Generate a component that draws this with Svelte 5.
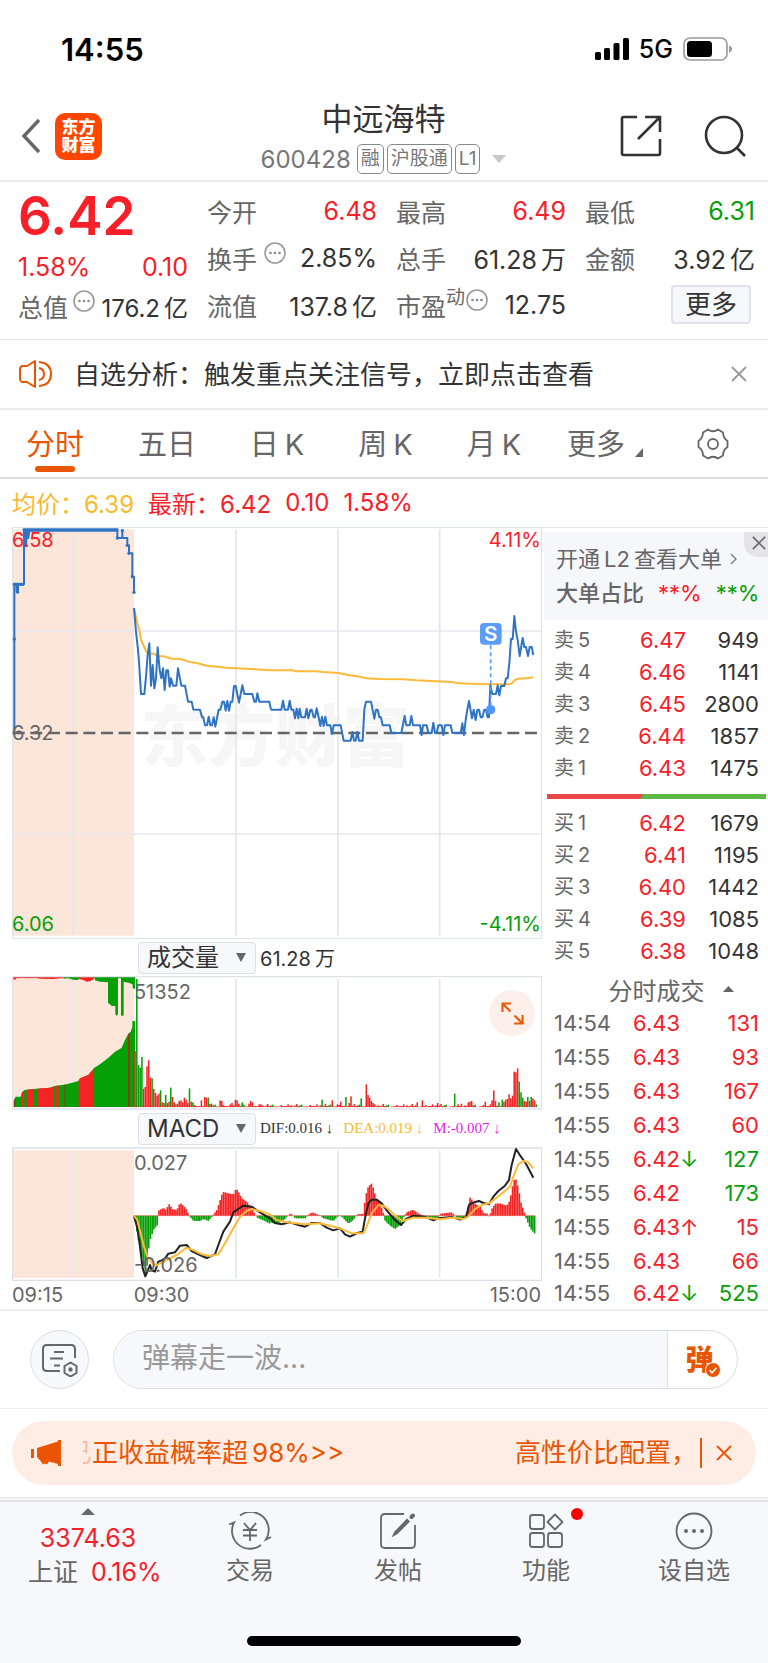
<script lang="ts">
interface Bar {
	x: number;
	y: number;
	h: number;
	up: boolean;
}

const quoteCells = [
	{ label: "今开", value: "6.48", tone: "up" },
	{ label: "最高", value: "6.49", tone: "up" },
	{ label: "最低", value: "6.31", tone: "down" },
	{ label: "换手", value: "2.85%", info: true },
	{ label: "总手", value: "61.28万" },
	{ label: "金额", value: "3.92亿" },
	{ label: "流值", value: "137.8亿" },
	{ label: "市盈", sup: "动", value: "12.75", info: true, tight: true },
];

const periods = ["分时", "五日", "日K", "周K", "月K"];
let period = $state("分时");
let volumeIndicator = $state("成交量");
let subIndicator = $state("MACD");
let comment = $state("");

const asks: [string, string, number][] = [
	["卖5", "6.47", 949],
	["卖4", "6.46", 1141],
	["卖3", "6.45", 2800],
	["卖2", "6.44", 1857],
	["卖1", "6.43", 1475],
];
const bids: [string, string, number][] = [
	["买1", "6.42", 1679],
	["买2", "6.41", 1195],
	["买3", "6.40", 1442],
	["买4", "6.39", 1085],
	["买5", "6.38", 1048],
];
const askShare = 44;

const trades = [
	{ time: "14:54", price: "6.43", lots: 131, up: true },
	{ time: "14:55", price: "6.43", lots: 93, up: true },
	{ time: "14:55", price: "6.43", lots: 167, up: true },
	{ time: "14:55", price: "6.43", lots: 60, up: true },
	{ time: "14:55", price: "6.42", move: "↓", lots: 127, up: false },
	{ time: "14:55", price: "6.42", lots: 173, up: false },
	{ time: "14:55", price: "6.43", move: "↑", lots: 15, up: true },
	{ time: "14:55", price: "6.43", lots: 66, up: true },
	{ time: "14:55", price: "6.42", move: "↓", lots: 525, up: false },
];

// Split where Chinese meets Latin, so the two can be set slightly apart
const runs = (text: string) =>
	text.split(/(?<=[\u4e00-\u9fa5])(?=[0-9A-Z])|(?<=[0-9A-Z])(?=[\u4e00-\u9fa5])/);

// Chart units: 3 per pixel, one trading minute is 5.1 wide
const STEP = 5.1;
const GRID_X = [708, 1014, 1319];
const AFTERNOON = 810;

const pricePre =
	"43,639 43,193 50,193 50,216 54,216 54,193 72,193 72,30 78,30 78,76 81,30 85,30 85,54 88,30 352,30 352,54 367,54 367,30 367,54 382,54 382,76 387,76 387,100 397,100 397,170 402,170 402,217";
const preDots = [
	[43, 357],
	[43, 193],
	[53, 216],
	[78, 76],
	[352, 54],
	[367, 32],
	[382, 76],
	[387, 100],
	[397, 170],
	[402, 217],
];
const priceAm =
	"402,264 408,335 414,390 417,425 423,522 433,522 438,470 443,405 448,370 453,497 458,435 463,505 468,475 473,382 479,450 484,475 489,445 494,510 499,451 504,451 509,500 513,475 519,497 529,497 534,445 544,497 555,497 564,545 575,545 580,569 600,569 606,592 610,592 615,616 621,616 626,590 631,616 636,616 641,592 646,620 656,569 661,569 667,545 672,545 677,572 682,543 687,572 692,545 697,545 702,498 707,498 717,548 727,496 733,522 757,522 763,545 768,545 772,520 778,545 808,545 813,569";
const pricePm =
	"3,569 34,569 39,542 44,569 54,569 59,542 64,569 70,569 75,595 80,566 85,595 89,566 94,592 105,592 110,566 115,595 121,569 125,569 131,592 135,592 140,565 146,592 151,618 156,590 161,618 166,590 171,616 181,616 186,642 191,616 212,616 221,662 242,662 247,636 252,662 257,662 262,636 267,662 278,662 283,569 288,545 303,545 313,596 318,569 323,569 328,592 333,592 338,616 359,616 364,639 394,639 404,588 409,616 419,616 424,588 429,616 450,616 455,645 459,616 470,616 475,639 485,639 490,608 495,639 500,639 505,616 515,616 520,645 525,616 542,616 547,639 572,639 577,610 582,645 587,600 592,569 597,543 606,595 611,569 617,600 622,569 627,569 632,592 637,592 643,569 648,569 653,592 657,592 661,496 667,522 678,522 683,496 688,526 693,498 703,498 708,475 713,475 718,430 723,357 728,357 733,288 738,335 743,360 749,408 758,354 763,381 768,381 774,408 779,381 785,381 790,405";
const avgAm =
	"402,264 412,310 418,330 423,360 430,375 440,397 465,403 475,408 490,409 515,416 540,417 555,421 570,426 590,429 620,437 680,443 740,446 810,451";
const avgPm =
	"0,451 70,451 75,454 140,454 160,456 205,459 240,466 275,471 288,475 330,477 400,478 440,481 500,484 545,486 560,489 600,491 660,493 718,493 725,490 735,480 745,476 775,474 790,472";

// Negative height is a falling minute
const volumePeaks: Record<number, number> = {
	0: 168, 1: -384, 2: -126, 3: -118, 4: -150, 5: 55, 6: 60, 7: 122, 8: 140, 9: 88, 10: -86, 11: 54,
	12: 42, 13: 34, 14: 40, 15: -50, 16: 14, 17: -12, 18: -36, 19: 12, 20: 16, 21: -58, 22: 30, 23: 14,
	24: 8, 25: -10, 26: 18, 27: 20, 28: 14, 29: 28, 30: 22, 31: 12, 32: -56, 33: 16, 34: -14, 39: 20,
	41: 30, 42: 28, 43: -28, 45: 10, 50: 20, 51: 18, 57: 12, 59: 22, 60: 20, 61: 10, 63: -14, 67: 10,
	68: 18, 69: 14, 74: 8, 110: -22, 116: 20, 119: 8, 121: 16, 124: -30, 126: 12, 127: 32, 133: -26,
	136: 68, 137: 36, 138: 28, 139: 18, 140: 12, 166: 14, 169: 20, 178: 12, 188: -40, 190: 8, 192: 10,
	196: 14, 197: 16, 198: 18, 206: 16, 210: 20, 211: 50, 212: 18, 214: -14, 216: -22, 217: 16, 218: 22,
	219: 24, 220: 38, 221: 26, 222: 34, 223: 106, 224: 104, 225: 116, 226: -76, 227: -44, 228: -28,
	229: 18, 230: 16, 231: -30, 232: 18, 233: -30, 234: 26, 235: 20, 236: -8,
};
const quiet = [2, 5, 0, 3, -3, 6, 2, 0, 8, -5, 2, 4, 0, 2, -7, 3, 9];

const volumeBars: Bar[] = Array.from({ length: 237 }, (_, i) => {
	const v = volumePeaks[i] ?? quiet[(i * 5) % quiet.length];
	return { x: 403 + i * STEP, y: 516 - Math.abs(v), h: Math.abs(v), up: v > 0 };
});

const preRed = [
	[42, 4],
	[64, 8],
	[80, 22],
	[111, 51],
	[166, 10],
	[193, 3],
	[236, 45],
	[384, 5],
];

const ZERO = 842;
const histAm: number[][] = [
	[402, 842], [412, 900], [420, 940], [430, 990], [435, 1022], [440, 1000], [445, 945], [450, 915],
	[455, 900], [460, 885], [472, 870], [474, 828], [490, 818], [496, 826], [508, 806], [515, 822],
	[530, 825], [540, 803], [550, 812], [560, 825], [566, 842], [572, 848], [580, 858], [600, 858],
	[610, 852], [625, 858], [635, 845], [642, 836], [650, 825], [660, 795], [668, 770], [680, 774],
	[700, 778], [708, 760], [715, 770], [725, 790], [740, 800], [755, 820], [765, 838], [770, 848],
	[790, 856], [809, 866],
];
const histPm: number[][] = [
	[0, 862], [20, 868], [45, 852], [58, 837], [66, 838], [75, 850], [105, 850], [118, 836], [128, 832],
	[150, 842], [160, 850], [190, 858], [205, 842], [215, 845], [235, 866], [250, 855], [262, 838],
	[280, 836], [285, 790], [292, 760], [303, 744], [310, 760], [318, 790], [330, 805], [340, 835],
	[345, 858], [360, 872], [375, 882], [390, 870], [402, 843], [410, 832], [428, 824], [450, 838],
	[465, 842], [480, 848], [500, 850], [512, 836], [545, 832], [560, 848], [580, 850], [590, 835],
	[600, 786], [612, 805], [630, 815], [640, 834], [652, 836], [658, 848], [663, 825], [675, 806],
	[690, 805], [710, 812], [720, 795], [725, 762], [735, 725], [745, 760], [752, 800], [762, 830],
	[768, 850], [780, 880], [793, 895],
];
const hist = [...histAm, ...histPm.map(([x, y]) => [x + AFTERNOON, y])];

function valueAt(points: number[][], x: number) {
	const i = points.findIndex((p) => p[0] >= x);
	if (i < 1) return points[i < 0 ? points.length - 1 : 0][1];
	const [x0, y0] = points[i - 1];
	const [x1, y1] = points[i];
	return y0 + ((y1 - y0) * (x - x0)) / (x1 - x0);
}

const macdBars: Bar[] = Array.from({ length: 236 }, (_, i) => {
	const x = 403 + i * STEP;
	const v = valueAt(hist, x + 2);
	return { x, y: Math.min(v, ZERO), h: Math.abs(v - ZERO), up: v < ZERO };
});

const difAm =
	"402,842 412,880 420,935 428,1000 436,1024 442,1010 450,990 455,1006 465,1010 475,980 485,976 495,970 505,956 525,952 540,932 560,930 575,948 600,960 620,969 645,958 655,930 670,890 690,860 700,832 715,822 730,812 755,815 780,832 810,850";
const difPm =
	"0,850 15,864 35,868 60,862 85,870 105,875 125,864 150,864 170,878 190,886 210,880 225,898 240,905 262,894 278,890 285,850 295,805 305,794 320,794 335,805 355,832 375,855 393,870 408,852 430,842 465,845 490,856 505,850 545,846 570,854 588,846 598,808 612,802 627,798 640,804 657,808 670,785 685,768 705,752 717,735 725,690 738,642 748,658 758,672 770,690 790,728";
const deaAm =
	"402,842 412,855 422,895 432,935 442,965 455,982 468,992 480,985 500,975 530,960 560,938 580,945 605,958 630,963 655,958 675,925 700,880 720,845 740,828 755,822 780,828 810,838";
const deaPm =
	"0,838 20,855 50,862 105,868 150,865 210,880 245,895 280,895 290,875 305,835 325,810 340,812 355,822 378,845 398,858 430,848 470,848 510,853 545,848 580,852 595,845 615,822 635,810 657,805 680,788 720,755 730,725 745,688 760,678 775,682 790,700";
</script>

{#snippet info()}
	<svg class="info" viewBox="0 0 22 22" aria-hidden="true">
		<circle cx="11" cy="11" r="10" fill="none" stroke="#999" stroke-width="1.6" />
		<circle cx="6.5" cy="11" r="1.3" fill="#888" />
		<circle cx="11" cy="11" r="1.3" fill="#888" />
		<circle cx="15.5" cy="11" r="1.3" fill="#888" />
	</svg>
{/snippet}

{#snippet cross()}
	<svg class="cross" viewBox="0 0 16 16" aria-hidden="true">
		<path d="M1 1l14 14M15 1L1 15" fill="none" stroke="currentColor" stroke-width="1.8" />
	</svg>
{/snippet}

{#snippet mixed(text: string)}{#each runs(text) as run}<span class="run">{run}</span>{/each}{/snippet}

{#snippet book(rows: [string, string, number][])}
	<table class="book">
		<tbody>
			{#each rows as [level, price, lots]}
				<tr>
					<th scope="row">{@render mixed(level)}</th>
					<td class="up">{price}</td>
					<td>{lots}</td>
				</tr>
			{/each}
		</tbody>
	</table>
{/snippet}

<div class="screen">
	<div class="status">
		<span class="clock">14:55</span>
		<div class="signals">
			<svg width="34" height="22" viewBox="0 0 34 22" aria-hidden="true">
				<rect x="0" y="14" width="6" height="8" rx="1.5" />
				<rect x="9" y="10" width="6" height="12" rx="1.5" />
				<rect x="18.500" y="5" width="6" height="17" rx="1.5" />
				<rect x="28" y="0" width="6" height="22" rx="1.5" />
			</svg>
			<span>5G</span>
			<svg width="49" height="24" viewBox="0 0 49 24" aria-hidden="true">
				<rect x="1" y="1" width="43" height="22" rx="6" fill="none" stroke="#999" stroke-width="1.6" />
				<rect x="4" y="4" width="25" height="16" rx="3.5" />
				<path d="M46 8.500q3 1 3 3.500t-3 3.500z" fill="#999" />
			</svg>
		</div>
	</div>

	<header class="top">
		<div class="side-left">
			<button class="plain" aria-label="返回">
				<svg width="20" height="36" viewBox="0 0 20 36">
					<path d="M18 2L3 18l15 16" fill="none" stroke="#666" stroke-width="3.400" />
				</svg>
			</button>
			<a class="logo" href="#home">东方<br />财富</a>
		</div>
		<div class="stock">
			<h1>中远海特</h1>
			<div class="code">
				<span>600428</span>
				<span class="tag">融</span>
				<span class="tag">沪股通</span>
				<span class="tag">L1</span>
				<svg class="caret" width="14" height="8" viewBox="0 0 14 8" aria-hidden="true">
					<path d="M0 0h14L7 8z" fill="#c8c8c8" />
				</svg>
			</div>
		</div>
		<div class="side-right">
			<button class="plain" aria-label="分享">
				<svg width="42" height="42" viewBox="0 0 42 42" fill="none" stroke="#333" stroke-width="2.600">
					<path d="M17 2H3.500Q2 2 2 3.500V38.500Q2 40 3.500 40H38.500Q40 40 40 38.500V24" />
					<path d="M25 2H40V17M40 2L18 24" />
				</svg>
			</button>
			<button class="plain" aria-label="搜索">
				<svg width="42" height="42" viewBox="0 0 42 42" fill="none" stroke="#333" stroke-width="2.600">
					<circle cx="20" cy="20" r="18" />
					<path d="M32 32l9 9" />
				</svg>
			</button>
		</div>
	</header>

	<section class="quote">
		<div class="last">
			<strong class="up">6.42</strong>
			<div class="pair change up"><span>1.58%</span><span>0.10</span></div>
			<div class="pair cap">
				<span class="label">总值{@render info()}</span>
				<span class="num">{@render mixed("176.2亿")}</span>
			</div>
		</div>
		<div class="cells">
			{#each quoteCells as cell}
				<div class="pair" class:tight={cell.tight}>
					<span class="label">
						{cell.label}{#if cell.sup}<span class="sup">{cell.sup}</span>{/if}{#if cell.info}{@render info()}{/if}
					</span>
					<span class="num {cell.tone ?? ''}">{@render mixed(cell.value)}</span>
				</div>
			{/each}
			<button class="more">更多</button>
		</div>
	</section>

	<div class="alert">
		<svg width="34" height="30" viewBox="0 0 34 30" fill="none" stroke="#ea5504" stroke-width="2" aria-hidden="true">
			<path d="M16 2v26l-8-5H3q-2-1-2-3V10q0-2 2-3h5z" stroke-linejoin="round" />
			<path d="M20 9q5 1 5 6t-5 6M20 3q12 1 12 12T20 27" />
		</svg>
		<a href="#signal">自选分析：触发重点关注信号，立即点击查看</a>
		<button class="plain" aria-label="关闭提示">{@render cross()}</button>
	</div>

	<nav class="tabs">
		{#each periods as name}
			<button class:active={period === name} onclick={() => (period = name)}>{@render mixed(name)}</button>
		{/each}
		<button class="more-tab">
			更多
			<svg width="8" height="9" viewBox="0 0 8 9" aria-hidden="true"><path d="M8 0v9H0z" fill="#666" /></svg>
		</button>
		<button class="gear" aria-label="图表设置">
			<svg width="32" height="32" viewBox="0 0 32 32" fill="none" stroke="#666" stroke-width="1.800">
				<path
					d="M11 1.500Q16 5 21 1.500L26 4.500Q26 10 30.500 13V19Q26 22 26 27.500L21 30.500Q16 27 11 30.500L6 27.500Q6 22 1.500 19V13Q6 10 6 4.500Z"
					stroke-linejoin="round"
				/>
				<circle cx="16" cy="16" r="5" />
			</svg>
		</button>
	</nav>

	<div class="legend">
		<span class="avg">均价：<b>6.39</b></span>
		<span class="up">最新：<b>6.42</b></span>
		<span class="up">0.10</span>
		<span class="up">1.58%</span>
	</div>

	<main class="board">
		<div class="charts">
			<div class="plot">
				<svg viewBox="36 21 1590 1236" role="img" aria-label="分时走势">
					<text class="watermark" x="422" y="722">东方财富</text>
					<rect x="38" y="28" width="364" height="1219" fill="#fce6da" />
					<g stroke="#e3e6ec" stroke-width="5">
						<path d="M219 28V1247M38 333H1625M38 942H1625" stroke="#e8e8f0" />
						{#each GRID_X as x}
							<path d="M{x} 28V1247" />
						{/each}
					</g>
					<path d="M38 1256V22H1625V1256Z" fill="none" stroke="#dfe3ea" stroke-width="4" />
					<polyline points={avgAm} class="line avg-line" />
					<polyline points={avgPm} class="line avg-line" transform="translate({AFTERNOON} 0)" />
					<path d="M38 639H1615" stroke="#666" stroke-width="7" stroke-dasharray="36 17" />
					<g class="price-line">
						<polyline points={pricePre} class="line" />
						<path d="M68 30H355" stroke-width="10" />
						<path d="M42 193H72" stroke-width="9" />
						{#each preDots as [cx, cy]}
							<circle {cx} {cy} r="5" />
						{/each}
						<polyline points={priceAm} class="line" />
						<polyline points={pricePm} class="line" transform="translate({AFTERNOON} 0)" />
					</g>
					<path d="M1472 376V560" stroke="#5a9df8" stroke-width="5" stroke-dasharray="12 9" />
					<circle cx="1472" cy="569" r="14" fill="#4f97f7" />
					<rect x="1440" y="309" width="65" height="65" rx="12" fill="#5a9df8" />
					<text x="1472" y="364" class="marker">S</text>
				</svg>
				<span class="tick top-left up">6.58</span>
				<span class="tick top-right up">4.11%</span>
				<span class="tick middle">6.32</span>
				<span class="tick bottom-left down">6.06</span>
				<span class="tick bottom-right down">-4.11%</span>
			</div>

			<div class="indicator">
				<label class="picker">
					<select bind:value={volumeIndicator} aria-label="成交量指标">
						<option>成交量</option>
						<option>成交额</option>
					</select>
					<svg width="10" height="9" viewBox="0 0 10 9" aria-hidden="true"><path d="M0 0h10L5 9z" fill="#666" /></svg>
				</label>
				<span class="volume-total">{@render mixed("61.28万")}</span>
			</div>

			<div class="plot">
				<svg viewBox="36 123 1590 402" role="img" aria-label="成交量">
					<defs>
						<clipPath id="pre-volume">
							<path
								d="M40 516L40 500L47 485H62L66 472L74 465L100 462L150 458L165 453L200 448L235 438L240 430L265 420L283 398L300 388L325 368L345 350L365 338L375 315L384 298L392 290L397 275V258H405V516Z"
							/>
						</clipPath>
					</defs>
					<rect x="38" y="126" width="364" height="390" fill="#fce6da" />
					<path d="M219 132V516" stroke="#e8e8f0" stroke-width="5" />
					{#each GRID_X as x}
						<path d="M{x} 132V516" stroke="#e3e6ec" stroke-width="5" />
					{/each}
					<g clip-path="url(#pre-volume)">
						<rect x="38" y="250" width="368" height="266" fill="#06a006" />
						{#each preRed as [x, width]}
							<rect {x} y="250" {width} height="266" fill={width > 5 ? "#f52424" : "#8a3c10"} />
						{/each}
					</g>
					<path
						d="M190 126V131L205 130L220 134L235 135V132L285 130V136L300 140L324 142V204L330 208L335 213H346V238L350 242L354 238V130H363V240L367 244L371 240V140L385 143L398 148V160L405 162V126Z"
						fill="#06a006"
					/>
					<path
						d="M38 126V130L44 135L50 130L70 129L80 130L110 129L118 131L160 132L190 129V126ZM236 126V132L250 135L260 140L272 138L282 132V126Z"
						fill="#f52424"
					/>
					{#each volumeBars as bar}
						<rect x={bar.x} y={bar.y} width="4.600" height={bar.h} fill={bar.up ? "#f52424" : "#06a006"} />
					{/each}
					<path d="M403 515H1600" stroke="#f52424" stroke-width="2" stroke-dasharray="14 8" />
					<path d="M38 522V125H1625V522Z" fill="none" stroke="#dfe3ea" stroke-width="4" />
				</svg>
				<span class="tick at-open">51352</span>
				<button class="expand" aria-label="展开">
					<svg width="23" height="23" viewBox="0 0 23 23" fill="none" stroke="#ee5a0c" stroke-width="2.200">
						<path d="M1.500 10V1.500H10M2 2l7.500 7.500M21.500 13v8.500H13M21 21l-7.500-7.500" />
					</svg>
				</button>
			</div>

			<div class="indicator">
				<label class="picker">
					<select bind:value={subIndicator} aria-label="副图指标">
						<option>MACD</option>
						<option>KDJ</option>
					</select>
					<svg width="10" height="9" viewBox="0 0 10 9" aria-hidden="true"><path d="M0 0h10L5 9z" fill="#666" /></svg>
				</label>
				<div class="macd-values">
					<span>DIF:0.016 ↓</span>
					<span class="avg">DEA:0.019 ↓</span>
					<span class="hist">M:-0.007 ↓</span>
				</div>
			</div>

			<div class="plot">
				<svg viewBox="36 636 1590 402" role="img" aria-label="MACD">
					<rect x="38" y="646" width="364" height="383" fill="#fce6da" />
					<path d="M219 646V1029" stroke="#e8e8f0" stroke-width="5" />
					{#each GRID_X as x}
						<path d="M{x} 646V1029" stroke="#e3e6ec" stroke-width="5" />
					{/each}
					<path d="M38 1036V639H1625V1036Z" fill="none" stroke="#dcdfe6" stroke-width="4" />
					{#each macdBars as bar}
						<rect x={bar.x} y={bar.y} width="4.900" height={bar.h} fill={bar.up ? "#f52424" : "#06a006"} />
					{/each}
					<path d="M403 842H1605" stroke="#f52424" stroke-width="2" stroke-opacity="0.600" />
					<polyline points={difAm} class="line dif-line" />
					<polyline points={difPm} class="line dif-line" transform="translate({AFTERNOON} 0)" />
					<polyline points={deaAm} class="line avg-line" />
					<polyline points={deaPm} class="line avg-line" transform="translate({AFTERNOON} 0)" />
				</svg>
				<span class="tick at-open">0.027</span>
				<span class="tick at-open low">-0.026</span>
			</div>

			<div class="times">
				<span>09:15</span>
				<span>09:30</span>
				<span>15:00</span>
			</div>
		</div>

		<aside class="depth">
			<div class="unlock">
				<a href="#level2">
					<span>{@render mixed("开通L2查看大单")}</span>
					<svg width="7" height="12" viewBox="0 0 7 12" aria-hidden="true">
						<path d="M1 1l5 5-5 5" fill="none" stroke="#777" stroke-width="1.300" />
					</svg>
				</a>
				<div class="ratio">
					<strong>大单占比</strong>
					<span class="up">**%</span>
					<span class="down">**%</span>
				</div>
				<button class="dismiss" aria-label="关闭">{@render cross()}</button>
			</div>
			{@render book(asks)}
			<div class="balance">
				<div class="sell" style="width: {askShare}%"></div>
			</div>
			{@render book(bids)}
			<button class="ticks-title">
				分时成交
				<svg width="11" height="6" viewBox="0 0 11 6" aria-hidden="true"><path d="M0 6L5.500 0 11 6z" fill="#666" /></svg>
			</button>
			<table class="ticks">
				<tbody>
					{#each trades as trade}
						<tr>
							<td>{trade.time}</td>
							<td class="up">
								{trade.price}{#if trade.move}<span class={trade.move === "↑" ? "up" : "down"}>{trade.move}</span>{/if}
							</td>
							<td class={trade.up ? "up" : "down"}>{trade.lots}</td>
						</tr>
					{/each}
				</tbody>
			</table>
		</aside>
	</main>

	<form class="comment" onsubmit={(e) => e.preventDefault()}>
		<button type="button" class="round" aria-label="弹幕设置">
			<svg width="38" height="34" viewBox="0 0 38 34" fill="none" stroke="#666" stroke-width="2">
				<path d="M19 28H6q-4 0-4-4V6q0-4 4-4h24q4 0 4 4v9" />
				<path d="M13 9h10M9 15.500h13M13 22.500h6" />
				<path d="M29.500 19.500l6 3.500v7l-6 3.500-6-3.500v-7z" stroke-linejoin="round" />
				<circle cx="29.500" cy="26.500" r="1.200" fill="#666" />
			</svg>
		</button>
		<div class="field">
			<input type="text" bind:value={comment} placeholder="弹幕走一波..." aria-label="弹幕" />
			<button class="danmu" aria-label="弹幕开关">
				<span>弹</span>
				<svg width="16" height="16" viewBox="0 0 16 16" aria-hidden="true">
					<circle cx="8" cy="8" r="7.500" fill="#ea5504" stroke="#fff" />
					<path d="M4.500 8l2.500 2.700 4.500-5" fill="none" stroke="#fff" stroke-width="1.600" />
				</svg>
			</button>
		</div>
	</form>

	<div class="promo-wrap">
		<div class="promo">
			<svg width="30" height="26" viewBox="0 0 30 26" fill="#ea5504" aria-hidden="true">
				<path d="M0 9h3v9H0zM6 8L27 1.500V0h3v26h-3v-2l-9-2.500-2 3-2-1-2 1-2-3L6 17z" />
			</svg>
			<a class="ticker" href="#promo">
				<span class="leaving">已</span>
				<span class="tail">{@render mixed("正收益概率超98%>>")}</span>
				<span>高性价比配置，</span>
			</a>
			<button class="plain" aria-label="关闭广告">{@render cross()}</button>
		</div>
	</div>

	<footer>
		<nav class="bottom">
			<a class="index" href="#index">
				<span class="centered">
					<svg width="14" height="7" viewBox="0 0 14 7" aria-hidden="true"><path d="M0 7l7-7 7 7z" fill="#666" /></svg>
					<span class="up">3374.63</span>
				</span>
				<span class="name">上证 <b class="up">0.16%</b></span>
			</a>
			<a href="#trade">
				<svg width="44" height="38" viewBox="0 0 44 38" fill="none" stroke="#666" stroke-width="1.800">
					<path d="M12 3.500A18 18 0 0 1 38 27.500L43 25M33 33A18 18 0 0 1 6 10.500L1 12.500" />
					<path d="M16 11l6 7 6-7M15 18h14M15 23.500h14M22 18v11" />
				</svg>
				交易
			</a>
			<a href="#post">
				<svg width="38" height="38" viewBox="0 0 38 38" fill="none" stroke="#666" stroke-width="1.800">
					<path d="M25 2H6Q2 2 2 6V32Q2 36 6 36H32Q36 36 36 32V13" />
					<path d="M12.500 25.500L15.500 19.500 28 6.500 31 9.500 18.500 22z" fill="#666" stroke="none" />
					<path d="M32.500 5l1.500-1.500" stroke-width="4" stroke-linecap="round" />
				</svg>
				发帖
			</a>
			<a href="#features">
				<span class="badged">
					<svg width="36" height="38" viewBox="0 0 36 38" fill="none" stroke="#666" stroke-width="1.800">
						<rect x="2" y="3" width="14" height="14" rx="2.500" />
						<rect x="2" y="21" width="14" height="14" rx="2.500" />
						<rect x="20" y="21" width="14" height="14" rx="2.500" />
						<path d="M27 2.500L34.500 10 27 17.500 19.500 10z" stroke-linejoin="round" />
					</svg>
					<i class="dot"></i>
				</span>
				功能
			</a>
			<a href="#watch">
				<svg width="38" height="38" viewBox="0 0 38 38">
					<circle cx="19" cy="19" r="17.500" fill="none" stroke="#666" stroke-width="1.800" />
					<circle cx="11" cy="19" r="2" fill="#666" />
					<circle cx="19" cy="19" r="2" fill="#666" />
					<circle cx="27" cy="19" r="2" fill="#666" />
				</svg>
				设自选
			</a>
		</nav>
		<div class="home"></div>
	</footer>
</div>

<style>
	:global(body) {
		margin: 0;
		background: #fff;
	}

	.screen {
		font-family: Inter, "Noto Sans CJK SC", sans-serif;
		font-size: 24px;
		color: #333;
		overflow: hidden;
	}

	.screen :is(button, input, select) {
		font-family: inherit;
		color: inherit;
	}

	button {
		padding: 0;
		border: 0;
		background: none;
		cursor: pointer;
	}

	a {
		color: inherit;
		text-decoration: none;
	}

	svg {
		display: block;
		flex: none;
	}

	b {
		font-weight: 400;
	}

	table {
		width: 100%;
		border-collapse: collapse;
	}

	.up {
		color: #f82028;
	}

	.down {
		color: #06a006;
	}

	.avg {
		color: #fdb92c;
	}

	.run + .run {
		margin-left: 4px;
	}

	.status {
		display: flex;
		justify-content: space-between;
		align-items: center;
		height: 98px;
		padding: 0 36px 0 61px;
		color: #000;
	}

	.clock {
		font-size: 31px;
		font-weight: 600;
	}

	.signals {
		display: flex;
		align-items: center;
		gap: 10px;
		font-size: 25px;
		font-weight: 500;
	}

	.top {
		display: grid;
		grid-template-columns: 1fr auto 1fr;
		align-items: center;
		height: 84px;
		padding: 0 22px 0 21px;
		border-bottom: 2px solid #ebebeb;
		box-sizing: border-box;
	}

	.side-left,
	.side-right {
		display: flex;
		align-items: center;
		gap: 14px;
		padding-bottom: 6px;
	}

	.side-right {
		justify-content: flex-end;
		gap: 42px;
	}

	.logo {
		box-sizing: border-box;
		width: 47px;
		height: 47px;
		padding-top: 5px;
		border-radius: 10px;
		background: #ff4500;
		color: #fff;
		font-size: 17px;
		font-weight: 900;
		line-height: 18px;
		text-align: center;
	}

	.stock {
		text-align: center;
	}

	h1 {
		margin: 0;
		font-size: 31px;
		font-weight: 400;
		line-height: 40px;
	}

	.code {
		display: flex;
		align-items: center;
		gap: 3px;
		height: 40px;
		font-size: 24px;
		color: #777;
	}

	.code > :first-child {
		margin-right: 3px;
	}

	.tag {
		padding: 0 3px;
		border: 1px solid #888;
		border-radius: 5px;
		font-size: 19px;
		line-height: 28px;
	}

	.caret {
		margin-left: 9px;
	}

	.quote {
		display: grid;
		grid-template-columns: 170fr 548fr;
		column-gap: 19px;
		padding: 5px 13px 11px 18px;
		font-size: 25px;
		border-bottom: 1px solid #e6e6e8;
	}

	.last strong {
		display: block;
		font-size: 53px;
		font-weight: 600;
		line-height: 58px;
	}

	.pair {
		display: flex;
		align-items: center;
		justify-content: space-between;
		height: 47px;
		white-space: nowrap;
	}

	.change {
		height: 44px;
	}

	.cap {
		height: 34px;
	}

	.cap .num {
		font-size: 24px;
	}

	.label {
		display: flex;
		align-items: center;
		color: #666;
	}

	.sup {
		align-self: flex-start;
		font-size: 19px;
		line-height: 22px;
	}

	.info {
		width: 22px;
		height: 22px;
		margin: 0 0 10px 7px;
	}

	.cap .info {
		margin-left: 5px;
	}

	.tight .info {
		margin-left: 1px;
	}

	.cells {
		display: grid;
		grid-template-columns: repeat(3, 1fr);
		column-gap: 19px;
	}

	.more {
		justify-self: end;
		align-self: center;
		width: 80px;
		height: 39px;
		margin-right: 4px;
		border: 2px solid #dfe2e8;
		border-radius: 4px;
		background: #f7f8fb;
		font-size: 26px;
		line-height: 32px;
	}

	.alert {
		display: flex;
		align-items: center;
		height: 68px;
		padding: 0 21px 0 19px;
		border-bottom: 2px solid #ededed;
		font-size: 26px;
		color: #333;
		white-space: nowrap;
	}

	.alert a {
		flex: 1;
		margin-left: 21px;
		padding-bottom: 4px;
	}

	.alert .plain {
		color: #999;
	}

	.cross {
		width: 16px;
		height: 16px;
	}

	.tabs {
		display: flex;
		justify-content: space-between;
		align-items: center;
		height: 67px;
		padding: 0 39px 0 26px;
		border-bottom: 2px solid #dcdce2;
		color: #666;
	}

	.tabs button {
		position: relative;
		height: 67px;
		padding-bottom: 4px;
		font-size: 29px;
		white-space: nowrap;
	}

	.tabs .run + .run {
		margin-left: 6px;
	}

	.tabs .active {
		color: #ea5504;
	}

	.tabs .active::after {
		content: "";
		position: absolute;
		right: 9px;
		bottom: 5px;
		left: 9px;
		height: 6px;
		border-radius: 3px;
		background: #ea5504;
	}

	.tabs .more-tab {
		display: flex;
		align-items: center;
		gap: 10px;
		margin-left: -8px;
	}

	.tabs .gear {
		padding-bottom: 0;
	}

	.more-tab svg {
		margin-top: 22px;
	}

	.legend {
		display: flex;
		align-items: center;
		gap: 14px;
		height: 46px;
		padding: 0 0 2px 12px;
		font-size: 24px;
	}

	.board {
		display: grid;
		grid-template-columns: 1fr 226px;
		padding-left: 12px;
		border-bottom: 2px solid #ececf0;
	}

	.plot {
		position: relative;
	}

	.plot > svg {
		width: 100%;
		height: auto;
	}

	.line {
		fill: none;
		stroke-width: 6;
		stroke-linejoin: round;
	}

	.price-line {
		stroke: #2f74c4;
		fill: #2f74c4;
	}

	.price-line circle {
		stroke: none;
	}

	.avg-line {
		stroke: #fdb938;
	}

	.dif-line {
		stroke: #222;
	}

	.watermark {
		font-size: 202px;
		font-weight: 900;
		fill: #f6f6f7;
	}

	.marker {
		fill: #fff;
		font-size: 62px;
		font-weight: 600;
		text-anchor: middle;
	}

	.tick {
		position: absolute;
		left: 0;
		font-size: 20px;
		line-height: 24px;
	}

	.tick:not(.up, .down) {
		color: #666;
	}

	.top-left {
		top: 1px;
	}

	.top-right {
		top: 1px;
		right: 1px;
		left: auto;
	}

	.middle {
		top: 50%;
		transform: translateY(-50%);
	}

	.bottom-left {
		bottom: 3px;
	}

	.bottom-right {
		right: 1px;
		bottom: 3px;
		left: auto;
	}

	.at-open {
		top: 4px;
		left: 23%;
	}

	.low {
		top: auto;
		bottom: 4px;
	}

	.indicator {
		display: flex;
		align-items: center;
		gap: 4px;
		height: 37px;
		padding-left: 126px;
	}

	.picker {
		position: relative;
	}

	.picker select {
		display: block;
		width: 118px;
		height: 32px;
		padding: 0 8px;
		border: 1px solid #dcdfe6;
		border-radius: 4px;
		background: #f7f8fb;
		font-size: 24px;
		line-height: 28px;
		appearance: none;
	}

	.picker svg {
		position: absolute;
		top: 11px;
		right: 10px;
		pointer-events: none;
	}

	.volume-total {
		font-size: 20px;
	}

	.macd-values {
		display: flex;
		gap: 10px;
		font-family: "Liberation Serif", serif;
		font-size: 15px;
		white-space: nowrap;
	}

	.hist {
		color: #e61ee6;
	}

	.expand {
		position: absolute;
		top: 14px;
		right: 7px;
		display: grid;
		place-items: center;
		width: 46px;
		height: 46px;
		border-radius: 50%;
		background: #fdf0ea;
	}

	.times {
		display: grid;
		grid-template-columns: 23% 1fr auto;
		padding: 1px 1px 0 0;
		font-size: 20px;
		line-height: 27px;
		color: #666;
	}

	.depth {
		display: flex;
		flex-direction: column;
		border-top: 1px solid #e3e6ec;
	}

	.unlock {
		position: relative;
		height: 88px;
		box-sizing: border-box;
		margin: 4px 0 4px 2px;
		padding: 10px 0 0 12px;
		background: #f6f7fb;
		font-size: 22px;
		line-height: 34px;
		color: #666;
		white-space: nowrap;
	}

	.unlock a {
		display: flex;
		align-items: center;
		gap: 8px;
	}

	.ratio {
		display: flex;
		gap: 14px;
	}

	.ratio strong {
		font-weight: 500;
	}

	.dismiss {
		position: absolute;
		top: 0;
		right: 0;
		display: grid;
		place-items: center;
		box-sizing: border-box;
		width: 24px;
		height: 25px;
		padding: 0 0 4px 6px;
		border-radius: 0 0 0 14px;
		background: #e4e4e8;
		color: #888;
	}

	.dismiss .cross {
		width: 14px;
		height: 14px;
	}

	.book {
		font-size: 22px;
	}

	.book th,
	.book td {
		height: 32px;
		padding: 0;
		line-height: 32px;
		text-align: right;
	}

	.book th {
		width: 64px;
		padding-left: 12px;
		font-size: 20px;
		font-weight: 400;
		text-align: left;
		color: #666;
	}

	.book td:last-child {
		width: 73px;
		padding-right: 9px;
	}

	.balance {
		display: flex;
		height: 5px;
		margin: 10px 2px 8px 5px;
		background: #5cb946;
	}

	.sell {
		background: #e94648;
		clip-path: polygon(0 0, 100% 0, calc(100% - 3px) 100%, 0 100%);
	}

	.ticks-title {
		display: flex;
		align-items: center;
		justify-content: center;
		gap: 18px;
		box-sizing: border-box;
		height: 39px;
		padding: 5px 0 0 32px;
		font-size: 24px;
	}

	.depth .ticks-title {
		color: #666;
	}

	.ticks {
		font-size: 22px;
	}

	.ticks td {
		height: 34px;
		padding: 0 9px 0 0;
		line-height: 34px;
		text-align: right;
	}

	.ticks tr:last-child td {
		height: 30px;
		line-height: 30px;
	}

	.ticks td:first-child {
		width: 79px;
		padding: 0 0 0 12px;
		text-align: left;
		color: #666;
	}

	.ticks td:nth-child(2) {
		padding: 0;
		text-align: left;
	}

	.comment {
		display: flex;
		align-items: center;
		gap: 24px;
		height: 97px;
		padding: 0 30px;
		border-bottom: 1px solid #efeff2;
	}

	.round {
		display: grid;
		place-items: center;
		box-sizing: border-box;
		width: 59px;
		height: 59px;
		border: 1px solid #dcdce6;
		border-radius: 50%;
		background: #f7f8fb;
	}

	.field {
		display: flex;
		flex: 1;
		box-sizing: border-box;
		height: 59px;
		border: 1px solid #dcdce6;
		border-radius: 30px;
		overflow: hidden;
	}

	.field input {
		flex: 1;
		min-width: 0;
		padding: 0 28px 4px;
		border: 0;
		background: #f7f8fb;
		font-size: 28px;
		outline: 0;
	}

	.field input::placeholder {
		color: #999;
		opacity: 1;
	}

	.field .danmu {
		position: relative;
		width: 70px;
		padding: 0 6px 4px 0;
		border-left: 1px solid #dcdce6;
		color: #ea5504;
		font-size: 28px;
		font-weight: 900;
	}

	.danmu svg {
		position: absolute;
		right: 16px;
		bottom: 10px;
	}

	.promo-wrap {
		padding: 12px;
		border-bottom: 2px solid #ececec;
	}

	.promo {
		display: flex;
		align-items: center;
		gap: 22px;
		height: 64px;
		padding: 0 24px 0 19px;
		border-radius: 32px;
		background: #feede5;
		color: #ea5504;
		font-size: 26px;
	}

	.ticker {
		display: flex;
		flex: 1;
		border-right: 2px solid #ea5504;
		padding-right: 3px;
		line-height: 30px;
		white-space: nowrap;
	}

	.leaving {
		display: flex;
		justify-content: flex-end;
		width: 9px;
		overflow: hidden;
		opacity: 0.3;
	}

	.tail {
		flex: 1;
	}

	.promo .plain {
		margin-left: -8px;
		color: #ea5504;
	}

	footer {
		display: flow-root;
		margin-top: 1px;
		border-top: 2px solid #dfe1e6;
		background: #f7f8fb;
	}

	.bottom {
		display: grid;
		grid-template-columns: repeat(5, 1fr);
		padding: 10px 0 0 28px;
		font-size: 24px;
		color: #666;
	}

	.bottom a {
		display: flex;
		flex-direction: column;
		align-items: center;
		gap: 4px;
		line-height: 34px;
	}

	.bottom .index {
		align-items: flex-start;
		gap: 0;
		margin-top: -4px;
		font-size: 25px;
		white-space: nowrap;
	}

	.centered {
		display: flex;
		flex-direction: column;
		align-items: center;
		width: 120px;
		gap: 6px;
	}

	.name b {
		margin-left: 6px;
	}

	.badged {
		position: relative;
	}

	.dot {
		position: absolute;
		top: -4px;
		right: -19px;
		width: 12px;
		height: 12px;
		border-radius: 50%;
		background: #f00;
	}

	.home {
		width: 274px;
		height: 10px;
		margin: 47px auto 17px;
		border-radius: 5px;
		background: #000;
	}
</style>
